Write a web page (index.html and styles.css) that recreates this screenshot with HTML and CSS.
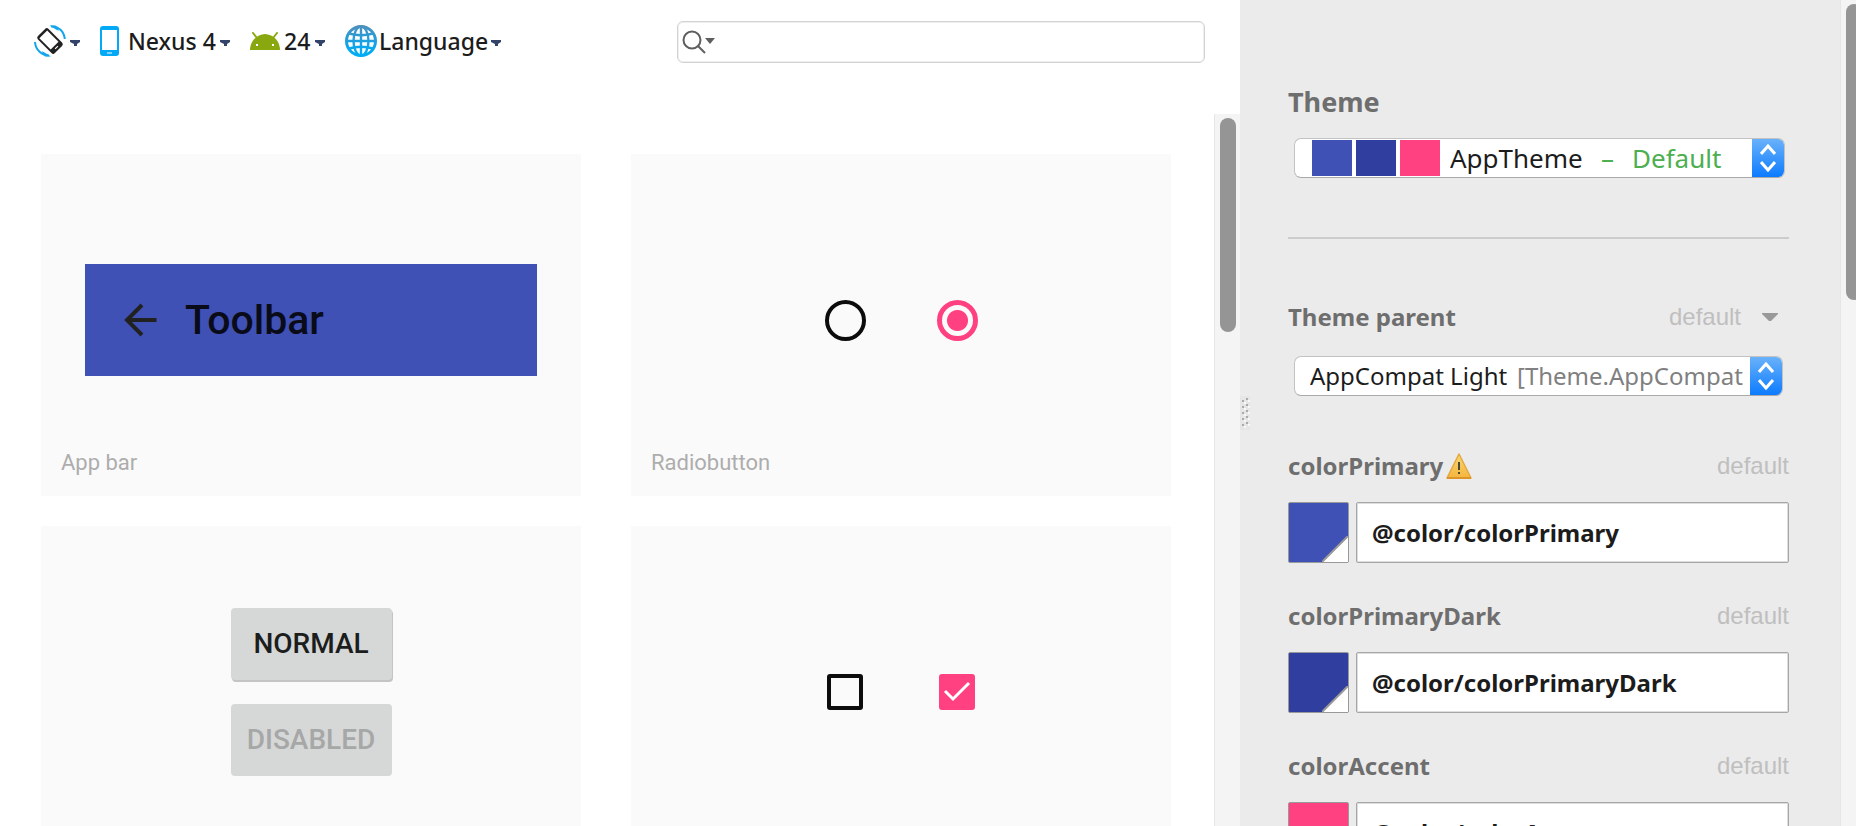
FILE: index.html
```html
<!DOCTYPE html>
<html lang="en">
<head>
<meta charset="utf-8">
<title>Theme Editor</title>
<link rel="stylesheet" href="styles.css">
</head>
<body>
<div class="app">
  <main class="preview">
    <header class="topbar">
      <div class="tools">
        <button class="tool tool-rotate" type="button" aria-label="Orientation">
          <svg width="32" height="32" viewBox="0 0 32 32" fill="none">
            <path d="M17 1.500C24 1 30 6 30.800 14" stroke="#10a5ec" stroke-width="2"/>
            <path d="M15.500 0.500h6l3.500 5.500-3-1.500z" fill="#10a5ec"/>
            <path d="M1 17C1.500 25 8 30.500 15 30.500" stroke="#10a5ec" stroke-width="2"/>
            <path d="M17 31.500h-6L7.500 26l3 1.500z" fill="#10a5ec"/>
            <g transform="translate(16 16) rotate(-45)">
              <rect x="-7.500" y="-12" width="15" height="24" rx="2.500" fill="#222"/>
              <rect x="-5.500" y="-9.500" width="11" height="16" fill="#fff"/>
              <path d="M-2 9.200h4" stroke="#fff" stroke-width="1.200"/>
            </g>
          </svg>
          <svg class="caret" width="10" height="6" viewBox="0 0 10 6"><path d="M0 0h10v2L7 4v2H4V4L0 2z" fill="#33436a"/></svg>
        </button>
        <label class="tool tool-device">
          <svg width="20" height="30" viewBox="0 0 20 30"><rect x="0" y="0" width="19" height="30" rx="3" fill="#03a9f4"/><rect x="2" y="4" width="15" height="20" fill="#fff"/><path d="M7 27h5" stroke="#fff" stroke-width="1"/></svg>
          <select class="tool-select" aria-label="Device"><option>Nexus 4</option></select>
          <svg class="caret" width="10" height="6" viewBox="0 0 10 6"><path d="M0 0h10v2L7 4v2H4V4L0 2z" fill="#33436a"/></svg>
        </label>
        <label class="tool tool-api">
          <svg width="30" height="18" viewBox="0 0 30 18"><path d="M0 18C0 11 4 6 9 3.500 13 1.500 17 1.500 21 3.500 26 6 30 11 30 18z" fill="#89a80f"/><path d="M3 1l4 5M27 1l-4 5" stroke="#89a80f" stroke-width="2" stroke-linecap="round"/><path d="M6 12h2v2H6zM22 12h2v2h-2z" fill="#fff"/></svg>
          <select class="tool-select" aria-label="API level"><option>24</option></select>
          <svg class="caret" width="10" height="6" viewBox="0 0 10 6"><path d="M0 0h10v2L7 4v2H4V4L0 2z" fill="#33436a"/></svg>
        </label>
        <label class="tool tool-language">
          <svg width="32" height="32" viewBox="0 0 32 32" fill="none">
            <defs><linearGradient id="globe" gradientUnits="userSpaceOnUse" x1="0" y1="0" x2="0" y2="32"><stop offset="0" stop-color="#4f8fba"/><stop offset="0.700" stop-color="#0aa7ee"/><stop offset="1" stop-color="#00aef5"/></linearGradient></defs>
            <g stroke="url(#globe)" stroke-width="2.400"><circle cx="16" cy="16" r="14.500" stroke-width="3"/><ellipse cx="16" cy="16" rx="7.500" ry="14.500"/><path d="M16 2v28"/><path d="M4 8.500c7 2 17 2 24 0"/><path d="M2 16.010L30 16"/><path d="M4 23.500c7-2 17-2 24 0"/></g>
          </svg>
          <select class="tool-select" aria-label="Language"><option>Language</option></select>
          <svg class="caret" width="10" height="6" viewBox="0 0 10 6"><path d="M0 0h10v2L7 4v2H4V4L0 2z" fill="#33436a"/></svg>
        </label>
      </div>
      <label class="search">
        <svg width="34" height="24" viewBox="0 0 34 24" fill="none"><circle cx="10" cy="10" r="8.500" stroke="#5e5e5e" stroke-width="2"/><path d="M16 16l7 7" stroke="#5e5e5e" stroke-width="2"/><path d="M23 8h10l-5 6z" fill="#5e5e5e"/></svg>
        <input class="search-input" type="text" aria-label="Search">
      </label>
    </header>

    <div class="canvas">
      <div class="cards">
        <section class="card">
          <div class="stage">
            <div class="appbar">
              <svg width="33" height="34" viewBox="0 0 33 34" fill="none"><path d="M32.500 17H3M18 2L3 17l15 15" stroke="#212121" stroke-width="4"/></svg>
              <span class="appbar-title">Toolbar</span>
            </div>
          </div>
          <h2 class="card-label">App bar</h2>
        </section>
        <section class="card">
          <div class="stage stage-radios">
            <input class="radio" type="radio" name="sample" aria-label="Unselected">
            <input class="radio" type="radio" name="sample" aria-label="Selected" checked>
          </div>
          <h2 class="card-label">Radiobutton</h2>
        </section>
        <section class="card">
          <div class="stage stage-buttons">
            <button class="raised" type="button">NORMAL</button>
            <button class="raised" type="button" disabled>DISABLED</button>
          </div>
        </section>
        <section class="card">
          <div class="stage stage-checks">
            <input class="check" type="checkbox" aria-label="Unchecked">
            <span class="check-wrap">
              <input class="check" type="checkbox" aria-label="Checked" checked>
              <svg class="check-mark" width="36" height="36" viewBox="0 0 36 36" fill="none"><path d="M6 17l8 8L30 9" stroke="#fff" stroke-width="3"/></svg>
            </span>
          </div>
        </section>
      </div>
      <div class="track"><div class="thumb"></div></div>
    </div>
  </main>

  <aside class="panel">
    <svg class="grip" width="10" height="34" viewBox="0 0 10 34"><path d="M0 0h10v34H0z" fill="#e6e6e6"/><path d="M4 6h2v2H4zM4 12h2v2H4zM4 18h2v2H4zM4 24h2v2H4zM4 30h2v2H4zM8 4h2v2H8zM8 10h2v2H8zM8 16h2v2H8zM8 22h2v2H8zM8 28h2v2H8z" fill="#f8f8f8"/><path d="M2 4h2v2H2zM2 10h2v2H2zM2 16h2v2H2zM2 22h2v2H2zM2 28h2v2H2zM6 2h2v2H6zM6 8h2v2H6zM6 14h2v2H6zM6 20h2v2H6zM6 26h2v2H6z" fill="#aaa"/></svg>
    <form class="settings">
      <label class="heading" for="theme">Theme</label>
      <div class="combo combo-theme">
        <span class="chip chip-primary"></span>
        <span class="chip chip-dark"></span>
        <span class="chip chip-accent"></span>
        <select class="combo-select" id="theme"><option>AppTheme</option></select>
        <span class="combo-default">–</span>
        <span class="combo-default">Default</span>
        <span class="stepper"><svg width="16" height="28" viewBox="0 0 16 28" fill="none" stroke="#fff" stroke-width="3"><path d="M1 10l7-8 7 8M1 18l7 8 7-8"/></svg></span>
      </div>
      <hr class="rule">
      <div class="prop-head">
        <label class="prop-name" for="parent">Theme parent</label>
        <button class="prop-menu" type="button">default<svg width="16" height="8" viewBox="0 0 16 8"><path d="M0 0h16v1L9 8H7L0 1z" fill="#999"/></svg></button>
      </div>
      <div class="combo combo-parent">
        <select class="combo-select" id="parent"><option>AppCompat Light</option></select>
        <span class="combo-path">[Theme.AppCompat</span>
        <span class="stepper"><svg width="16" height="28" viewBox="0 0 16 28" fill="none" stroke="#fff" stroke-width="3"><path d="M1 10l7-8 7 8M1 18l7 8 7-8"/></svg></span>
      </div>

      <div class="prop">
        <div class="prop-head">
          <label class="prop-name" for="c1">colorPrimary</label>
          <svg class="warn" width="26" height="26" viewBox="0 0 26 26"><defs><linearGradient id="amber" x1="0" y1="0" x2="0" y2="1"><stop offset="0" stop-color="#f7d873"/><stop offset="1" stop-color="#f5b53d"/></linearGradient></defs><path d="M13 1L25 25H1z" fill="url(#amber)" stroke="#e5a83f" stroke-width="1.500" stroke-linejoin="round"/><path d="M1 25h24" stroke="#dd9527" stroke-width="2"/><path d="M13 9v8M13 19v2" stroke="#4c4634" stroke-width="2"/></svg>
          <span class="prop-state">default</span>
        </div>
        <div class="prop-body">
          <button class="swatch swatch-primary" type="button" aria-label="Pick colorPrimary"><svg class="fold" width="26" height="26" viewBox="0 0 26 26"><path d="M26 0v26H0z" fill="#fff"/><path d="M0 26L26 0" stroke="#999" stroke-width="2"/></svg></button>
          <input class="value" id="c1" type="text" value="@color/colorPrimary">
        </div>
      </div>
      <div class="prop">
        <div class="prop-head">
          <label class="prop-name" for="c2">colorPrimaryDark</label>
          <span class="prop-state">default</span>
        </div>
        <div class="prop-body">
          <button class="swatch swatch-dark" type="button" aria-label="Pick colorPrimaryDark"><svg class="fold" width="26" height="26" viewBox="0 0 26 26"><path d="M26 0v26H0z" fill="#fff"/><path d="M0 26L26 0" stroke="#999" stroke-width="2"/></svg></button>
          <input class="value" id="c2" type="text" value="@color/colorPrimaryDark">
        </div>
      </div>
      <div class="prop">
        <div class="prop-head">
          <label class="prop-name" for="c3">colorAccent</label>
          <span class="prop-state">default</span>
        </div>
        <div class="prop-body">
          <button class="swatch swatch-accent" type="button" aria-label="Pick colorAccent"><svg class="fold" width="26" height="26" viewBox="0 0 26 26"><path d="M26 0v26H0z" fill="#fff"/><path d="M0 26L26 0" stroke="#999" stroke-width="2"/></svg></button>
          <input class="value" id="c3" type="text" value="@color/colorAccent">
        </div>
      </div>
    </form>
    <div class="track track-panel"><div class="thumb thumb-panel"></div></div>
  </aside>
</div>
</body>
</html>
```

FILE: styles.css
```css
* {
  box-sizing: border-box;
}

body {
  margin: 0;
  background: #fff;
  color: #1c1c1c;
  font-family: "Noto Sans", "Open Sans", sans-serif;
}

button,
input,
select {
  margin: 0;
  padding: 0;
  border: 0;
  border-radius: 0;
  background: none;
  color: inherit;
  font: inherit;
  appearance: none;
}

svg {
  display: block;
  flex: none;
}

.app {
  display: grid;
  grid-template-columns: minmax(0, 155fr) minmax(0, 77fr);
  height: 100vh;
  overflow: hidden;
}

.preview {
  display: flex;
  flex-direction: column;
  min-height: 0;
}

/* Top bar */

.topbar {
  display: flex;
  flex: none;
  justify-content: space-between;
  padding: 21px 35px 51px 34px;
}

.tools {
  display: flex;
  align-items: center;
  gap: 20px;
  height: 40px;
  font-size: 23px;
  font-weight: 500;
  line-height: 30px;
}

.tool {
  display: flex;
  align-items: center;
  gap: 4px;
}

.tool-device {
  gap: 8px;
}

.tool-device .caret {
  margin-left: -4px;
}

.tool-language {
  gap: 2px;
}

.tool .caret {
  margin-top: 4px;
}

.search {
  display: flex;
  align-items: center;
  flex: 0 1 528px;
  height: 42px;
  padding-left: 4px;
  border: 1px solid #d2d2d2;
  border-radius: 6px;
  box-shadow: inset 0 0 0 1px #efefef;
}

.search-input {
  flex: 1;
  min-width: 0;
  height: 100%;
  outline: 0;
  font-size: 23px;
}

/* Preview cards */

.canvas {
  display: flex;
  flex: 1;
  min-height: 0;
  overflow: hidden;
}

.cards {
  display: grid;
  flex: 1;
  grid-template-columns: 1fr 1fr;
  grid-auto-rows: 342px;
  gap: 30px 50px;
  padding: 40px 43px 40px 41px;
}

.card {
  display: grid;
  grid-template-rows: 100%;
  background: #fafafa;
  font-family: Roboto, sans-serif;
}

.stage,
.card-label {
  grid-area: 1 / 1;
}

.stage {
  display: flex;
  align-items: center;
  justify-content: center;
  padding: 0 44px 10px;
}

.card-label {
  align-self: end;
  margin: 0;
  padding: 0 20px 18px;
  color: #adadad;
  font-size: 22px;
  font-weight: 400;
  line-height: 30px;
}

.appbar {
  display: flex;
  align-items: center;
  gap: 28px;
  flex: 1;
  height: 112px;
  padding-left: 39px;
  background: #3f51b5;
}

.appbar-title {
  color: #090b19;
  font-size: 41px;
  font-weight: 500;
  line-height: 48px;
}

.stage-radios {
  gap: 71px;
}

.radio {
  width: 41px;
  height: 41px;
  border: 4px solid #0c0c0c;
  border-radius: 50%;
}

.radio:checked {
  border: 5px solid #ff4081;
  background: radial-gradient(circle, #ff4081 10px, transparent 11px);
}

.stage-buttons {
  flex-direction: column;
  gap: 24px;
}

.raised {
  width: 161px;
  height: 72px;
  border-radius: 4px;
  background: #d6d8d7;
  box-shadow: 1px 2px 0 #c4c4c4;
  color: #1c1d1d;
  font-size: 28px;
  font-weight: 500;
  line-height: 36px;
}

.raised:disabled {
  box-shadow: none;
  color: #a6a7a7;
}

.stage-checks {
  gap: 76px;
}

.check {
  display: block;
  width: 36px;
  height: 36px;
  border: 4px solid #0c0c0c;
  border-radius: 3px;
}

.check:checked {
  border-color: #ff4081;
  background: #ff4081;
}

.check-wrap {
  position: relative;
}

.check-mark {
  position: absolute;
  inset: 0;
  pointer-events: none;
}

/* Scrollbars */

.track {
  flex: none;
  width: 26px;
  padding: 4px 4px 0 5px;
  border-left: 1px solid #e6e6e6;
  background: #f4f4f4;
}

.thumb {
  width: 16px;
  height: 214px;
  border-radius: 8px;
  background: #959595;
}

.track-panel {
  width: 16px;
  overflow: hidden;
}

.thumb-panel {
  height: 296px;
}

/* Settings panel */

.panel {
  position: relative;
  display: flex;
  min-height: 0;
  overflow: hidden;
  background: #ebebeb;
}

.grip {
  position: absolute;
  top: 396px;
  left: 0;
}

.settings {
  flex: 1;
  min-width: 0;
  padding: 86px 51px 0 48px;
}

.heading {
  display: block;
  margin-bottom: 20px;
  color: #6e6e6e;
  font-size: 27px;
  font-weight: 700;
  line-height: 32px;
}

.combo {
  display: flex;
  align-items: center;
  height: 40px;
  overflow: hidden;
  border: 1px solid #c2c2c2;
  border-bottom-color: #a9a9a9;
  border-radius: 7px;
  background: #fff;
  white-space: nowrap;
}

.combo-theme {
  gap: 4px;
  margin: 0 4px 0 6px;
  padding-left: 17px;
  font-size: 26px;
  line-height: 36px;
}

.combo-parent {
  gap: 9px;
  margin: 23px 6px 54px;
  padding-left: 15px;
  font-size: 24px;
  line-height: 36px;
}

.combo-select {
  flex: none;
}

.chip {
  flex: none;
  width: 40px;
  height: 36px;
}

.chip-primary,
.swatch-primary {
  background: #3f51b5;
}

.chip-dark,
.swatch-dark {
  background: #303f9f;
}

.chip-accent,
.swatch-accent {
  background: #ff4081;
}

.chip-accent {
  margin-right: 6px;
}

.combo-default {
  margin-left: 14px;
  color: #4caf50;
}

.combo-path {
  color: #808080;
}

.stepper {
  display: flex;
  flex: none;
  align-items: center;
  justify-content: center;
  width: 32px;
  height: 40px;
  margin-left: auto;
  background: linear-gradient(#6cb3fa, #0a7aff);
}

.combo-parent .stepper {
  margin-left: -9px;
}

.combo-path {
  flex: 1;
}

.rule {
  height: 2px;
  margin: 59px 0 62px;
  border: 0;
  background: #ccc;
}

.prop {
  margin-bottom: 37px;
}

.prop-head {
  display: flex;
  align-items: center;
  height: 32px;
  font-size: 24px;
  line-height: 32px;
}

.prop-name {
  color: #6e6e6e;
  font-weight: 700;
}

.prop-menu,
.prop-state {
  margin-left: auto;
  color: #bfbfbf;
  font-family: "Liberation Sans", Arial, sans-serif;
}

.prop-menu {
  display: flex;
  align-items: center;
  gap: 21px;
  margin-right: 11px;
}

.warn {
  margin-left: 3px;
}

.prop-body {
  display: flex;
  gap: 7px;
  margin-top: 20px;
}

.swatch {
  display: flex;
  flex: none;
  align-items: flex-end;
  justify-content: flex-end;
  width: 61px;
  height: 61px;
  border: 1px solid #999;
  border-radius: 2px;
}

.value {
  flex: 1;
  min-width: 0;
  height: 61px;
  padding: 0 15px;
  border: 1px solid #a6a6a6;
  border-radius: 2px;
  outline: 0;
  background: #fff;
  box-shadow: inset 0 0 0 1px #dedede;
  font-size: 24px;
  font-weight: 700;
}
```
